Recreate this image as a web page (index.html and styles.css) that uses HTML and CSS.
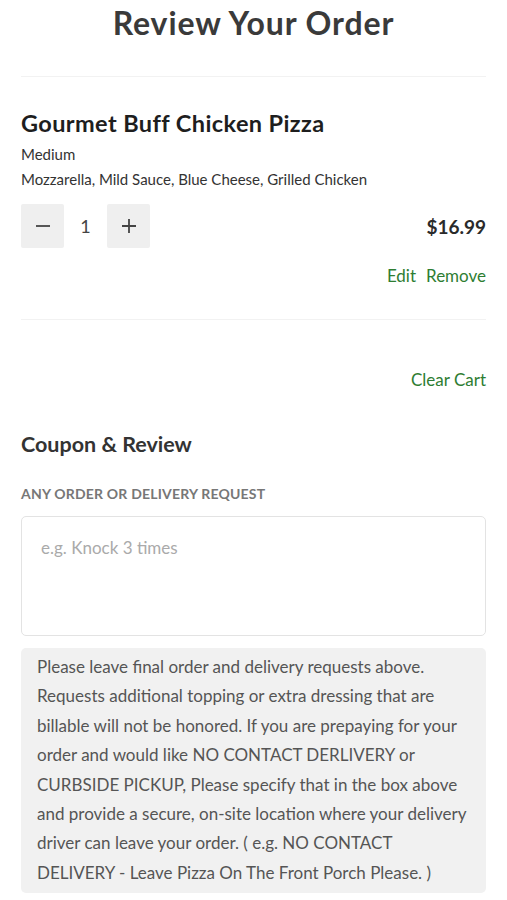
FILE: index.html
```html
<!DOCTYPE html>
<html lang="en">
<head>
    <meta charset="UTF-8">
    <meta name="viewport" content="width=device-width, initial-scale=1.0">
    <title>Review Your Order</title>
    <link rel="stylesheet" href="styles.css">
</head>
<body>
    <main class="page">
        <h1 class="page-title">Review Your Order</h1>
        <hr class="divider">

        <!-- cart item -->
        <section class="cart-item">
            <h2 class="item-name">Gourmet Buff Chicken Pizza</h2>
            <p class="item-size">Medium</p>
            <p class="item-toppings">Mozzarella, Mild Sauce, Blue Cheese, Grilled Chicken</p>
            <div class="item-row">
                <div class="qty">
                    <button class="qty-btn" aria-label="Decrease">
                        <svg width="16" height="16" viewBox="0 0 16 16"><path d="M1 8h14" stroke="#444" stroke-width="1.8"/></svg>
                    </button>
                    <span class="qty-value">1</span>
                    <button class="qty-btn" aria-label="Increase">
                        <svg width="16" height="16" viewBox="0 0 16 16"><path d="M1 8h14M8 1v14" stroke="#444" stroke-width="1.8"/></svg>
                    </button>
                </div>
                <span class="item-price">$16.99</span>
            </div>
            <div class="item-actions">
                <a href="#" class="link">Edit</a>
                <a href="#" class="link">Remove</a>
            </div>
        </section>
        <hr class="divider">

        <div class="clear-row">
            <a href="#" class="link">Clear Cart</a>
        </div>

        <!-- coupon & review -->
        <section class="review">
            <h3 class="review-title">Coupon &amp; Review</h3>
            <label class="review-label" for="request">ANY ORDER OR DELIVERY REQUEST</label>
            <textarea id="request" class="review-input" placeholder="e.g. Knock 3 times"></textarea>
            <p class="review-note">Please leave final order and delivery requests above. Requests additional topping or extra dressing that are billable will not be honored. If you are prepaying for your order and would like NO CONTACT DERLIVERY or CURBSIDE PICKUP, Please specify that in the box above and provide a secure, on-site location where your delivery driver can leave your order. ( e.g. NO CONTACT DELIVERY - Leave Pizza On The Front Porch Please. )</p>
        </section>
    </main>
</body>
</html>
```

FILE: styles.css
```css
* {
    margin: 0;
    padding: 0;
    box-sizing: border-box;
}

body {
    font-family: 'Lato', 'Liberation Sans', sans-serif;
    background-color: #fff;
    color: #222;
}

.page {
    padding: 0 21px;
}

.page-title {
    text-align: center;
    font-size: 32px;
    font-weight: 700;
    letter-spacing: 0.9px;
    color: #3a3a3a;
    line-height: 46px;
}

.divider {
    border: none;
    border-top: 1px solid #f2f2f2;
    margin: 30px 0 0;
}

/* item */
.cart-item {
    padding-top: 31px;
    padding-bottom: 3px;
}

.item-name {
    font-size: 23.5px;
    font-weight: 700;
    letter-spacing: 0.4px;
    color: #1e1e1e;
    line-height: 30px;
}

.item-size,
.item-toppings {
    font-size: 15px;
    color: #333;
    line-height: 25px;
}

.item-size {
    margin-top: 4px;
}

.item-row {
    display: flex;
    justify-content: space-between;
    align-items: center;
    margin-top: 12px;
}

.qty {
    display: flex;
    align-items: center;
}

.qty-btn {
    width: 43px;
    height: 44px;
    border: none;
    border-radius: 2px;
    background: #efefef;
    display: flex;
    align-items: center;
    justify-content: center;
}

.qty-value {
    width: 43px;
    text-align: center;
    font-size: 18px;
    color: #444;
}

.item-price {
    font-size: 19px;
    font-weight: 700;
    color: #2a2a2a;
}

.item-actions {
    display: flex;
    justify-content: flex-end;
    gap: 10px;
    margin-top: 17px;
}

.link {
    color: #2e7d32;
    text-decoration: none;
    font-size: 17px;
}

.clear-row {
    display: flex;
    justify-content: flex-end;
    padding-top: 49px;
}

/* review */
.review {
    padding-top: 41px;
}

.review-title {
    font-size: 21.5px;
    font-weight: 700;
    color: #333;
}

.review-label {
    display: block;
    margin-top: 28px;
    font-size: 14px;
    font-weight: 700;
    letter-spacing: 0.2px;
    color: #777;
}

.review-input {
    display: block;
    width: 100%;
    height: 120px;
    margin-top: 14px;
    padding: 20px 19px;
    border: 1px solid #e3e3e3;
    border-radius: 5px;
    font-family: inherit;
    font-size: 17px;
    resize: none;
}

.review-input::placeholder {
    color: #aaa;
}

.review-note {
    margin-top: 12px;
    padding: 4px 15px 6px 16px;
    background: #f1f1f1;
    border-radius: 5px;
    font-size: 17px;
    line-height: 29.4px;
    color: #555;
}
```
